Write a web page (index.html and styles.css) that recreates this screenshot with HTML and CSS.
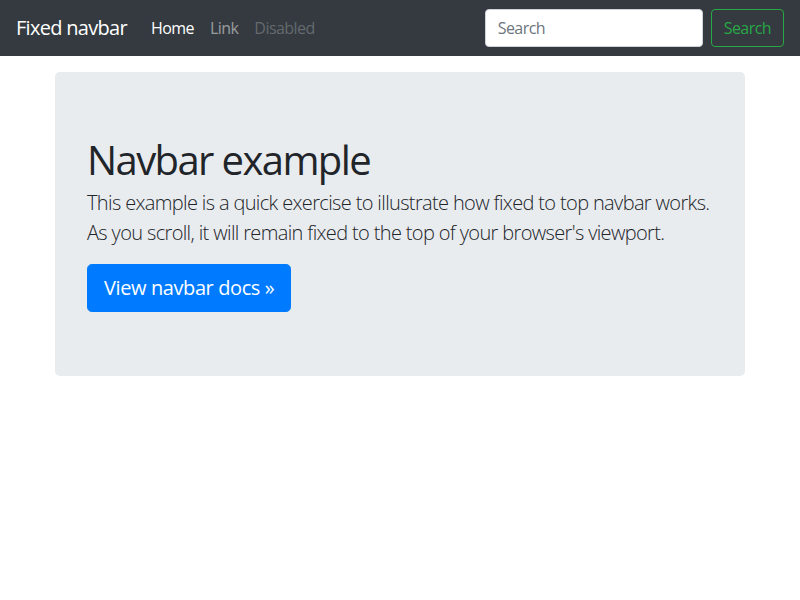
FILE: index.html
```html
<!DOCTYPE html>
<html lang="en">
<head>
<meta charset="utf-8">
<title>Fixed top navbar example</title>
<link rel="stylesheet" href="styles.css">
</head>
<body>
<nav class="navbar">
  <a class="brand" href="#">Fixed navbar</a>
  <ul class="nav">
    <li><a class="nav-link active" href="#">Home</a></li>
    <li><a class="nav-link" href="#">Link</a></li>
    <li><a class="nav-link disabled" href="#">Disabled</a></li>
  </ul>
  <form class="search">
    <input class="search-input" type="text" placeholder="Search">
    <button class="search-btn" type="button">Search</button>
  </form>
</nav>
<main class="container">
  <div class="jumbotron">
    <h1 class="title">Navbar example</h1>
    <p class="lead">This example is a quick exercise to illustrate how fixed to top navbar works. As you scroll, it will remain fixed to the top of your browser's viewport.</p>
    <a class="btn-primary" href="#">View navbar docs &raquo;</a>
  </div>
</main>
</body>
</html>
```
FILE: styles.css
```css
* { box-sizing: border-box; }
html, body { margin: 0; }
body {
  font-family: "Open Sans", "Noto Sans", sans-serif;
  font-size: 16px;
  line-height: 1.5;
  letter-spacing: -0.035em;
  color: #212529;
  background: #fff;
  padding-top: 72px;
}
.navbar {
  position: fixed;
  top: 0; left: 0; right: 0;
  height: 56px;
  background: #343a40;
  display: flex;
  align-items: center;
  padding: 8px 16px;
}
.brand {
  color: #fff;
  font-size: 20px;
  line-height: 30px;
  margin-right: 16px;
  text-decoration: none;
  letter-spacing: -0.035em;
}
.nav {
  display: flex;
  list-style: none;
  margin: 0;
  padding: 0;
  flex: 1;
}
.nav-link {
  display: block;
  padding: 8px;
  color: rgba(255,255,255,.5);
  text-decoration: none;
}
.nav-link.active { color: #fff; }
.nav-link.disabled { color: rgba(255,255,255,.25); }
.search { display: flex; align-items: center; margin: 0; }
.search-input {
  width: 218px;
  height: 38px;
  padding: 6px 12px;
  font: inherit;
  font-size: 16px;
  letter-spacing: inherit;
  color: #495057;
  background: #fff;
  border: 1px solid #ced4da;
  border-radius: 4px;
  margin-right: 8px;
}
.search-input::placeholder { color: #6c757d; }
.search-btn {
  height: 38px;
  padding: 6px 12px;
  font: inherit;
  font-size: 16px;
  letter-spacing: inherit;
  color: #28a745;
  background: transparent;
  border: 1px solid #28a745;
  border-radius: 4px;
}
.container {
  width: 720px;
  margin: 0 auto;
  padding: 0 15px;
}
.jumbotron {
  background: #e9ecef;
  border-radius: 4.8px;
  padding: 64px 32px;
  margin-bottom: 32px;
}
.title {
  font-size: 40px;
  font-weight: 400;
  line-height: 44px;
  letter-spacing: -0.04em;
  margin: 0 0 8px;
  padding-top: 2px;
  height: 44px;
}
.lead {
  font-size: 20px;
  font-weight: 300;
  line-height: 30px;
  letter-spacing: -0.032em;
  margin: 0 0 16px;
}
.btn-primary {
  display: inline-block;
  color: #fff;
  background: #007bff;
  border: 1px solid #007bff;
  border-radius: 4.8px;
  font-size: 20px;
  line-height: 30px;
  padding: 8px 16px;
  letter-spacing: -0.02em;
  text-decoration: none;
}
```
